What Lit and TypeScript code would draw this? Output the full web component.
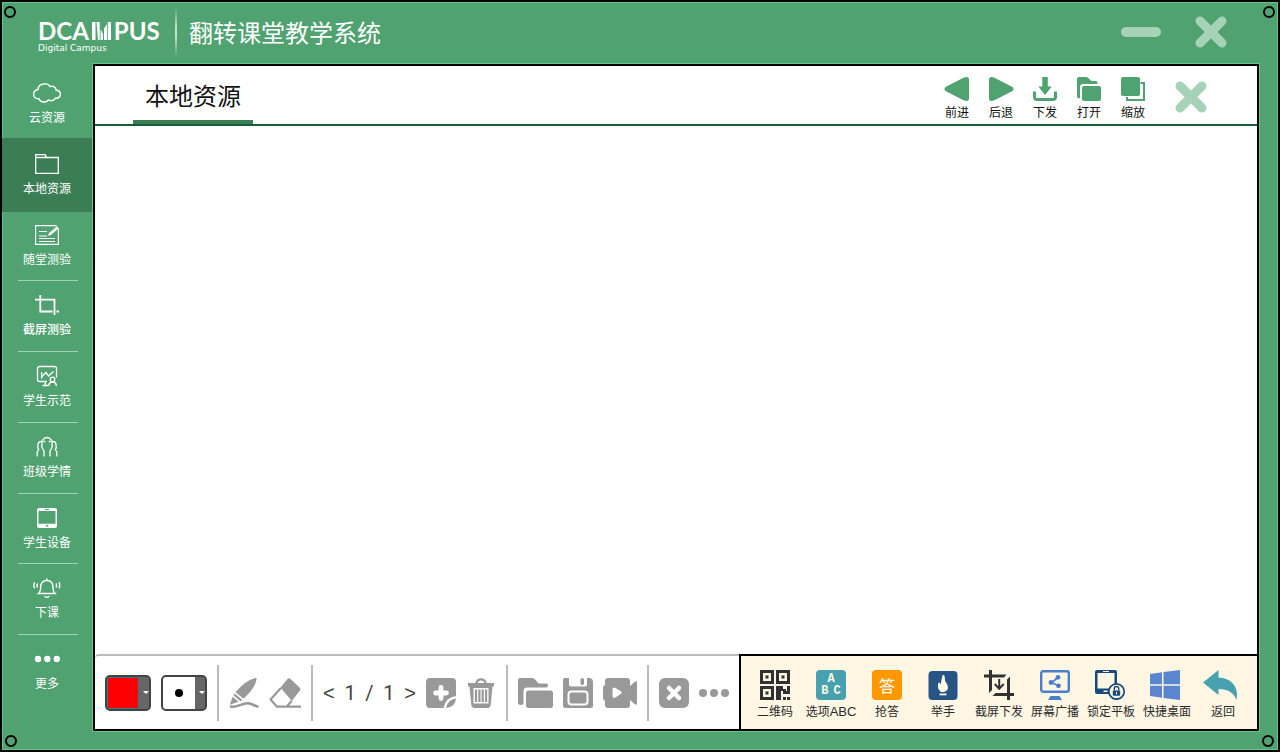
import { LitElement, html, css, svg, TemplateResult } from "lit";
import { customElement, property, state } from "lit/decorators.js";
import { classMap } from "lit/directives/class-map.js";

const icon = (w: number, h: number, body: TemplateResult | unknown) =>
  html`<svg width=${w} height=${h} viewBox="0 0 ${w} ${h}" fill="none" aria-hidden="true">${body}</svg>`;

/* ---------- sidebar icons, 28 x 24 ---------- */
const cloud = icon(28, 24, svg`<path stroke="#fff" stroke-width="1.4" d="M5 8.5C5 5 8 2.8 11 3c3-.5 5 .8 6 2.500 3-1 6 .6 6 3.500 3 .5 4.400 2.300 4.400 4.200 0 2.900-2.300 4.400-4.900 3.900-1 2.500-4.300 3.200-7 1.900-2.500 3-8.500 2.800-9.500-1.400C3 18.200.6 16 .6 13.500.6 11 2 9 5 8.500Z"/>`);
const folder = icon(28, 24, svg`<path stroke="#fff" stroke-width="1.300" d="M2.700 21.300V2.700h9.500l1.300 2.800h11.800v15.800ZM2.700 5.500h11"/>`);
const quiz = icon(28, 24, svg`<path stroke="#fff" stroke-width="1.200" d="M25.400 6v15.400H2.600V2.600h21M6 8.500h8M6 13h8M6 15.500h16M6 18.500h16"/><path fill="#fff" d="m16 10 8-6.800 1.900 2-8 6.700-2.900.9Z"/>`);
const crop = icon(28, 24, svg`<path stroke="#fff" stroke-width="1.800" d="M7.300 2v16.500h12.200M2 6.600h19.500V22M23.500 18.500H26"/>`);
const board = icon(28, 24, svg`<path stroke="#fff" stroke-width="1.300" d="M14 17.500H6.500a2 2 0 0 1-2-2v-11a2 2 0 0 1 2-2h15a2 2 0 0 1 2 2v9M12.300 17.500v4M9.500 21.500h6M8.600 8v6.500M9 12.500l4-4 2.500 3.500 5-4.500"/><circle cx="19.500" cy="15.500" r="2.300" stroke="#fff" stroke-width="1.300"/><path stroke="#fff" stroke-width="1.400" d="M15.800 22c0-2.400 1.500-4 3.700-4s3.800 1.600 3.800 4"/>`);
const group = icon(28, 24, svg`<path stroke="#fff" stroke-width="1.300" d="M9.600 13.500C8.300 12.500 8.600 11 9 10 8 6 10.500 2.500 14 2.500S20 6 19 10c.4 1 .7 2.500-.6 3.500M9.500 13.500 11 16v5.500M18.500 13.500 17 16v5.500M10.300 6.500h2M15.700 6.500h2M9 6.500C6 6.200 4.500 8 5 11c-.6 1-.2 2.500.7 3.300L4.200 17v4.500M19 6.500c3-.3 4.500 1.500 4 4.500.6 1 .2 2.500-.7 3.300L23.800 17v4.500"/>`);
const tablet = icon(28, 24, svg`<rect x="4" y="2" width="20" height="20" rx="2" fill="#fff"/><path fill="#50a371" d="M5.500 5h17v12.700h-17ZM12 3h4v1h-4ZM13 19h2.200v1.600H13Z"/>`);
const bell = icon(28, 24, svg`<path stroke="#fff" stroke-width="1.400" d="M5.500 17.500c2.200-2 2.200-4 2.200-7 0-3.300 2.300-6 5.400-6h1.400c3.100 0 5.400 2.700 5.400 6 0 3 0 5 2.300 7ZM13.800 4.500V2.200M11.500 20c1 1.700 3.800 1.700 4.800 0M1.600 6.200c-1 2-1 4 0 6M4.600 7.500c-.8 1.200-.8 2.600 0 3.800M26 6.200c1 2 1 4 0 6M23 7.500c.8 1.200.8 2.600 0 3.800"/>`);
const more = icon(28, 24, svg`<g fill="#fff"><circle cx="5" cy="12" r="3.200"/><circle cx="14.300" cy="12" r="3.200"/><circle cx="23.800" cy="12" r="3.200"/></g>`);

/* ---------- resource toolbar icons ---------- */
const back = icon(26, 24, svg`<path fill="#4ea370" d="M2 9.800 19.500.8c3.500-1.600 5.500-.6 5.500 2v18.400c0 2.600-2 3.600-5.500 2L2 14.200c-2-1.200-2-3.200 0-4.400Z"/>`);
const forward = icon(26, 24, svg`<path fill="#4ea370" d="M24 9.800 6.500.8C3 -.8 1 .2 1 2.800v18.400c0 2.600 2 3.600 5.500 2l17.500-9c2-1.200 2-3.200 0-4.400Z"/>`);
const download = icon(26, 24, svg`<path fill="#4ea370" d="M10.300 0h5.500v9.500h4L13 18 6.300 9.500h4Z"/><path stroke="#4ea370" stroke-width="3" d="M2.500 14.500V20c0 1.600 1 2.500 2.500 2.500h16c1.500 0 2.500-.9 2.500-2.500v-5.500"/>`);
const open = icon(26, 24, svg`<path fill="#4ea370" d="M1 2Q1 0 3 0h8l4.500 4H20q1.500 0 1.500 3H7q-3 0-3 3v11q-3 1-3-1.500Z"/><rect x="6" y="9" width="19" height="15" rx="2" fill="#4ea370"/>`);
const scale = icon(26, 24, svg`<rect x="1" width="19" height="19" rx="2" fill="#4ea370"/><path stroke="#4ea370" stroke-width="2" d="M20.500 6H24v17H7v-3"/>`);
const cross = icon(32, 32, svg`<path stroke="#a6d2b8" stroke-width="9" stroke-linecap="round" d="m5 5 22 22M27 5 5 27"/>`);
const minus = icon(40, 32, svg`<rect y="11" width="40" height="10" rx="5" fill="#a6d2b8"/>`);

/* ---------- drawing bar icons ---------- */
const pen = icon(30, 30, svg`<path fill="#999" d="M25.500.3q2.600-.8 2 1.300-1.500 8.400-13 19.200L6.500 14.300Q16.500 2.500 25.500.3ZM5.600 15.500l7.600 6.300-1.700 1.400-7-5.800ZM3.600 18.700l6 5L.8 26.700Z"/><path stroke="#999" stroke-width="2.600" stroke-linecap="round" d="M2 28.500c7 1.500 11-3.800 17-3.300 4 .3 6 2.500 9.500 3.300"/>`);
const eraser = icon(32, 30, svg`<path fill="#999" d="M18.500 1q1.300-1.400 2.800-.2l9.500 9q1 1.200.2 2.400L22.800 23 11.500 9.500Z"/><path stroke="#999" stroke-width="2.200" stroke-linejoin="round" d="M12 10 1.500 21.500l6.500 7.200h9.500l5.300-6M9 28.700h23"/>`);
const addPage = icon(30, 30, svg`<path fill="#999" d="M4 0h22a4 4 0 0 1 4 4v14q-10 1-12.500 12H4a4 4 0 0 1-4-4V4a4 4 0 0 1 4-4Z"/><path stroke="#fff" stroke-width="4.800" stroke-linecap="round" d="M15 9.500v11M9.500 15h11"/><path fill="#999" d="M30 20.500q-.5 8.500-10 9.500 1.500-8.500 10-9.500Z"/>`);
const trash = icon(30, 30, svg`<path fill="#999" d="M2 5h26v3.500h-1.500L24.700 27q-.5 3-3.200 3h-13q-2.700 0-3.200-3L3.500 8.500H2Z"/><path stroke="#999" stroke-width="2.400" d="M10.500 5.500c0-5.500 9-5.500 9 0"/><path fill="#fff" d="M7.500 10h15v15.500h-15Z"/><path stroke="#999" stroke-width="2.200" d="M10 11.500V24M13.400 11.500V24M16.700 11.500V24M20.100 11.500V24"/>`);
const openFile = icon(35, 30, svg`<path fill="#999" d="M0 2Q0 0 2 0h12q2 0 3.500 2l3 3.500H28q2 0 2 2T28 9.500H9q-3.500 0-3.500 3.500v12q0 2-2.700 2T0 25Z"/><rect x="8" y="12.500" width="27" height="17.500" rx="2.500" fill="#999"/>`);
const save = icon(30, 30, svg`<path fill="#999" d="M2 0h4v6.500Q6 8.500 8 8.500h14q2 0 2-2V0h2.500Q30 .5 30 4v24q0 2-2 2H2q-2 0-2-2V2Q0 0 2 0Z"/><rect x="17.500" width="3.500" height="7" rx="1.700" fill="#999"/><rect x="5.500" y="13.500" width="19" height="13" rx="3" stroke="#fff" stroke-width="2"/><rect x="8" y="16" width="14" height="8" rx="2" fill="#999"/>`);
const video = icon(34, 30, svg`<path fill="#999" d="M5 0H24q3 0 3 3v5l4.500-4Q34 2 34 5v20q0 3-2.500 1L27 22v5q0 3-3 3H5q-3 0-3-3v-4.500Q0 22 0 20V9.500q0-2 2-2.500V3q0-3 3-3Z"/><path fill="#fff" d="M9.500 12q0-3.500 3-2l5.500 3.300q1.800 1.200 0 2.400L12.500 19.500q-3 1.500-3-2Z"/>`);
const closePage = icon(30, 30, svg`<rect width="30" height="30" rx="6" fill="#999"/><path stroke="#fff" stroke-width="4.500" stroke-linecap="round" d="m10 10 10 10M20 10 10 20"/>`);
const dots = icon(30, 30, svg`<g fill="#999"><circle cx="4" cy="15" r="4"/><circle cx="15" cy="15" r="4"/><circle cx="26" cy="15" r="4"/></g>`);

/* ---------- classroom dock icons ---------- */
const qr = icon(30, 30, svg`<g fill="#303133"><path fill-rule="evenodd" d="M0 0h14v14H0Zm3 3v8h8V3Zm2.500 2.500h3v3h-3ZM16 0h14v14H16Zm3 3v8h8V3Zm2.500 2.500h3v3h-3ZM0 16h14v14H0Zm3 3v8h8v-8Zm2.500 2.500h3v3h-3Z"/><path d="M16 16h7v3h3v2h1v-5h3v8h-7v-3h-2v9h-5ZM23 27h3v3h-3ZM27 27h3v3h-3Z"/></g>`);
const abc = html`<span class="tile teal"><span>A</span><span class="pair"><i>B</i><i>C</i></span></span>`;
const answer = html`<span class="tile orange">答</span>`;
const hand = icon(30, 30, svg`<rect x="0.500" y="1" width="29" height="29" rx="4" fill="#265485"/><path fill="#fff8e8" d="M14.500 5q2.200-.6 2.200 2l.4 4 1.600 2.600q3.500 5.800-2.400 8.400h-3.500q-3-2.500-3-5.500l.3-3.500 1.500-.5 1 2Z"/><path fill="#fff8e8" d="M11.500 23.500h7v1.800h-7Z"/>`);
const cropSend = icon(30, 30, svg`<g fill="#303133"><path d="M5 0h3v4.500h14.500L20 7.500H8V20l-3 3V7.500H0v-3h5Z"/><path d="M26 6.500V23h4v3h-4v4h-3v-4H8.500l3-3H23V9.500Z"/></g><path stroke="#303133" stroke-width="2" d="M15.200 9v9.500M10.700 14l4.500 4.700 4.500-4.700"/>`);
const broadcast = icon(30, 30, svg`<rect x="1.200" y="1.200" width="27.600" height="20.600" rx="2" stroke="#4a7fce" stroke-width="2.400"/><path fill="#4a7fce" d="M10.500 26h9l2.500 4H8Z"/><path stroke="#4a7fce" stroke-width="1.600" d="m18 7.500-6.500 5 7 3.200"/><g fill="#4a7fce"><circle cx="18" cy="7.300" r="2.400"/><circle cx="11" cy="12.500" r="2.400"/><circle cx="18.500" cy="15.800" r="2.400"/></g>`);
const lock = icon(32, 30, svg`<path fill="#174a7c" fill-rule="evenodd" d="M2 0h18q2 0 2 2v22H2q-2 0-2-2V2Q0 0 2 0Zm.5 3v15.500h17V3Z"/><path fill="#fff6e3" d="M8 1h6v1H8ZM8.500 20.500h4V22h-4Z"/><circle cx="21.500" cy="21.500" r="7.700" fill="#fff6e3" stroke="#174a7c" stroke-width="1.700"/><rect x="17.800" y="20.500" width="7.400" height="5.300" rx="1" fill="#174a7c"/><path stroke="#174a7c" stroke-width="1.400" d="M19.300 20.500v-2c0-2.600 4.400-2.600 4.400 0v2"/><path fill="#fff6e3" d="M21 22h1v2.300h-1Z"/>`);
const desktop = icon(34, 30, svg`<path fill="#5a86cf" d="m0 4 12-1.700v11.900H0ZM13.500 2 30 0v14.200H13.500ZM0 15.800h12v11.900L0 26ZM13.500 15.800H30V30l-16.500-2.100Z"/>`);
const reply = icon(40, 30, svg`<path fill="#48a1ae" d="M0 12.500 15.500 0v7.500C27 8 36.500 15.500 33.500 30 30.500 22 25 19.500 15.500 19v6Z"/>`);

const NAV = [
  ["云资源", cloud], ["本地资源", folder], ["随堂测验", quiz], ["截屏测验", crop], ["学生示范", board],
  ["班级学情", group], ["学生设备", tablet], ["下课", bell], ["更多", more],
] as const;
const TOOLS = [["前进", back], ["后退", forward], ["下发", download], ["打开", open], ["缩放", scale]] as const;
const DOCK = [
  ["二维码", qr], [html`选项<span class="latin">ABC</span>`, abc], ["抢答", answer], ["举手", hand], ["截屏下发", cropSend],
  ["屏幕广播", broadcast], ["锁定平板", lock], ["快捷桌面", desktop], ["返回", reply],
] as const;

const base = css`
  * { box-sizing: border-box; }
  svg { display: block; flex: none; }
  button {
    margin: 0; padding: 0; border: 0; background: none; color: inherit;
    font: inherit; cursor: pointer; white-space: nowrap;
  }
`;

@customElement("side-nav")
class SideNav extends LitElement {
  @state() private active = 1;
  static styles = [base, css`
    :host { display: block; }
    .nav {
      display: grid; grid-auto-rows: 1fr; height: 100%;
      padding: 5px 1px 44px 0; color: #fff;
    }
    .item {
      position: relative; display: flex; flex-direction: column; align-items: center; gap: 4px;
      padding-top: 12px; font-size: 12px; line-height: 16px;
    }
    .item.ruled::after {
      content: ""; position: absolute; left: 16px; right: 14px; bottom: 0;
      height: 1px; background: #a5d1b6;
    }
    .item.active { background: #3b7d54; margin: -2px 0 -1px; padding-top: 14px; }
    .item.strong { font-weight: 500; }
  `];
  render() {
    return html`<nav class="nav">
      ${NAV.map(([label, glyph], i) => html`
        <button
          class=${classMap({ item: true, active: i === this.active, ruled: i > 1 && i < 8, strong: i === 3 })}
          @click=${() => (this.active = i)}
        >${glyph}<span>${label}</span></button>`)}
    </nav>`;
  }
}

@customElement("draw-bar")
class DrawBar extends LitElement {
  @property({ type: Number }) page = 1;
  @property({ type: Number }) pages = 1;
  static styles = [base, css`
    :host { display: block; border-top: 2px solid #bbb; border-top-left-radius: 4px; min-width: 0; }
    .bar { display: flex; align-items: center; gap: 10px; height: 100%; padding-left: 10px; }
    .bar > * { flex: none; }
    .rule { width: 2px; height: 56px; background: #bbb; }
    .picker {
      display: grid; grid-template-columns: 1fr 10px; align-items: center;
      width: 46px; height: 36px; border: 2px solid #444; border-radius: 5px; background: #666; overflow: hidden;
    }
    .value { display: grid; place-items: center; height: 100%; background: #fff; }
    .value.red { background: #f00; border: 1px solid #357a80; }
    .dot { width: 8px; height: 8px; border-radius: 50%; background: #000; }
    .caret { justify-self: end; border: 3px solid transparent; border-top-color: #fff; border-bottom: 0; }
    .pager {
      display: flex; justify-content: space-between; align-items: center; width: 93px;
      font: 20px/24px Roboto, "Liberation Sans", sans-serif; color: #444;
    }
    .step { font-family: "Liberation Sans", sans-serif; }
  `];
  render() {
    const tool = (label: string, glyph: unknown) => html`<button aria-label=${label}>${glyph}</button>`;
    return html`<div class="bar">
      <button class="picker" aria-label="颜色"><span class="value red"></span><span class="caret"></span></button>
      <button class="picker" aria-label="粗细"><span class="value"><span class="dot"></span></span><span class="caret"></span></button>
      <span class="rule"></span>
      ${tool("画笔", pen)}${tool("橡皮", eraser)}
      <span class="rule"></span>
      <div class="pager">
        <button class="step" aria-label="上一页">&lt;</button><span>${this.page}</span><span>/</span><span>${this.pages}</span><button class="step" aria-label="下一页">&gt;</button>
      </div>
      ${tool("新建", addPage)}${tool("删除", trash)}
      <span class="rule"></span>
      ${tool("打开", openFile)}${tool("保存", save)}${tool("录像", video)}
      <span class="rule"></span>
      ${tool("关闭", closePage)}${tool("更多", dots)}
    </div>`;
  }
}

@customElement("class-dock")
class ClassDock extends LitElement {
  static styles = [base, css`
    :host { display: block; border: solid #000; border-width: 2px 0 0 2px; background: #fff6e3; }
    .dock { display: grid; grid-template-columns: repeat(9, 1fr); padding: 14px 6px 0; }
    .item {
      display: flex; flex-direction: column; align-items: center; gap: 3px;
      min-width: 0; color: #2b2b2b; font-size: 12px; line-height: 16px;
    }
    .latin { font: 13px/16px "Liberation Sans", sans-serif; }
    .tile {
      display: flex; flex-direction: column; align-items: center; justify-content: center;
      width: 30px; height: 30px; border-radius: 4px; color: #fff8e8;
    }
    .teal { background: #48a1ae; font: bold 12px/12px "Liberation Mono", monospace; }
    .pair { display: flex; gap: 5px; }
    .pair i { font-style: normal; }
    .orange { background: #ff9800; font-size: 16px; font-weight: 500; }
  `];
  render() {
    return html`<div class="dock">
      ${DOCK.map(([label, glyph]) => html`<button class="item">${glyph}<span>${label}</span></button>`)}
    </div>`;
  }
}

@customElement("app-root")
class AppRoot extends LitElement {
  static styles = [base, css`
    :host {
      display: block; height: 100vh;
      font-family: "Noto Sans CJK SC", "Noto Sans", sans-serif; color: #111;
    }
    .window {
      position: relative; display: grid; grid-template: 62px minmax(0, 1fr) / 91px minmax(0, 1fr);
      height: 100%; border: 2px solid #000; background: #50a371; box-shadow: inset 0 0 0 1px #5fc88a;
    }
    .screw { position: absolute; width: 12px; height: 12px; border: 2px solid #000; border-radius: 50%; }
    .tl { left: 2px; top: 4px; }
    .tr { right: 3px; top: 4px; }
    .bl { left: 3px; bottom: 3px; }
    .br { right: 4px; bottom: 3px; }
    .header {
      grid-column: 1 / -1; display: flex; align-items: center; padding: 0 51px 3px 36px; color: #fff;
    }
    .brand { display: flex; flex-direction: column; padding-top: 10px; width: 137px; }
    .name {
      display: flex; align-items: center; gap: 3px;
      font: 700 24px/22px Lato, "Noto Sans", sans-serif;
    }
    .sub { padding-top: 2px; font: 9px/9px "DejaVu Sans", sans-serif; }
    .split {
      width: 2px; height: 50px; margin-right: 12px;
      background: linear-gradient(transparent, #c4e2cf 40%, #c4e2cf 60%, transparent);
    }
    .title { margin: 0; font-size: 24px; font-weight: 400; line-height: 32px; }
    .controls { display: flex; gap: 34px; margin-left: auto; }
    .panel {
      display: grid; grid-template-rows: auto minmax(0, 1fr) 75px;
      margin: 0 19px 19px 0; border: 2px solid #000; background: #fff; box-shadow: 0 0 0 1px #5fc88a;
    }
    .toolbar { display: flex; height: 60px; padding: 0 50px 0 38px; border-bottom: 2px solid #165f37; }
    .tab {
      width: 120px; padding-top: 4px; border-bottom: 4px solid #3b7d54; font-size: 24px; line-height: 50px;
    }
    .tools { display: flex; margin-left: auto; padding-top: 11px; }
    .tool {
      display: flex; flex-direction: column; align-items: center; gap: 3px;
      width: 44px; font-size: 12px; line-height: 16px;
    }
    .close { align-self: center; margin-left: 20px; padding-top: 3px; }
    .footer { display: grid; grid-template-columns: minmax(0, 1fr) 518px; }
  `];
  render() {
    return html`<div class="window">
      <header class="header">
        <div class="brand">
          <span class="name"><span>DCA</span>${icon(19, 18, svg`<path fill="#fff" d="M0 0h3.500v18H0ZM4.500 0h3.200v18H6ZM8.500 7l2.500 5v6H8.500ZM12 6.500 15 2v16h-3ZM15.800 0H19v18h-3.200Z"/>`)}<span>PUS</span></span>
          <span class="sub">Digital Campus</span>
        </div>
        <span class="split"></span>
        <h1 class="title">翻转课堂教学系统</h1>
        <div class="controls">
          <button aria-label="最小化">${minus}</button>
          <button aria-label="关闭">${cross}</button>
        </div>
      </header>
      <side-nav></side-nav>
      <main class="panel">
        <div class="toolbar">
          <button class="tab">本地资源</button>
          <div class="tools">
            ${TOOLS.map(([label, glyph]) => html`<button class="tool">${glyph}<span>${label}</span></button>`)}
          </div>
          <button class="close" aria-label="关闭资源">${cross}</button>
        </div>
        <section></section>
        <div class="footer">
          <draw-bar></draw-bar>
          <class-dock></class-dock>
        </div>
      </main>
      <span class="screw tl"></span><span class="screw tr"></span>
      <span class="screw bl"></span><span class="screw br"></span>
    </div>`;
  }
}
